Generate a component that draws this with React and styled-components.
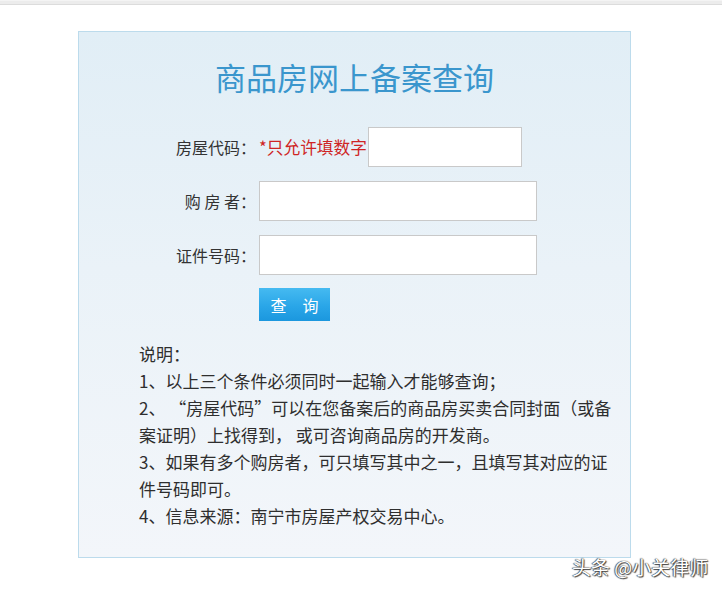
import styled, { createGlobalStyle } from "styled-components";

const GlobalStyle = createGlobalStyle`
  html, body {
    margin: 0;
    padding: 0;
    background: #fff;
  }
  body {
    font-family: "Noto Sans CJK SC", "Noto Sans", sans-serif;
    color: #333;
  }
`;

const Page = styled.div`
  position: relative;
  width: 722px;
  height: 596px;
  overflow: hidden;
`;

const TopStrip = styled.div`
  height: 3px;
  background: #ececec;
  border-bottom: 1px solid #dcdcdc;
  border-top: 1px solid #f4f4f4;
`;

const Panel = styled.div`
  margin: 26px 0 0 78px;
  width: 553px;
  height: 527px;
  box-sizing: border-box;
  border: 1px solid #bcdbec;
  background: linear-gradient(180deg, #e1eef6 0%, #eaf2f8 45%, #f3f6fa 100%);
  padding: 23px 0 0;
`;

const Title = styled.h1`
  margin: 0 0 28px;
  font-size: 31px;
  font-weight: normal;
  line-height: 44px;
  text-align: center;
  color: #3a96cd;
`;

const Form = styled.div`
  display: flex;
  flex-direction: column;
  gap: 14px;
`;

const Row = styled.div`
  display: flex;
  align-items: center;
  height: 40px;
`;

const Label = styled.span`
  width: 177px;
  margin-right: 3px;
  text-align: right;
  font-size: 16px;
  color: #333;
  white-space: pre;
`;

const Hint = styled.span`
  font-size: 16.7px;
  color: #cf2424;
  margin-right: 1px;
`;

const Input = styled.input`
  box-sizing: border-box;
  width: ${(p) => p.$w}px;
  height: 40px;
  margin: 0;
  border: 1px solid #c9c9c9;
  background: #fff;
  outline: none;
`;

const ButtonRow = styled.div`
  padding-left: 180px;
  margin-top: -1px;
`;

const QueryButton = styled.button`
  width: 71px;
  height: 33px;
  border: none;
  padding: 0;
  background: linear-gradient(180deg, #45baf1 0%, #2aa6e8 55%, #1b97de 100%);
  color: #fff;
  font-family: "Noto Sans CJK SC", sans-serif;
  font-size: 16px;
  cursor: pointer;
`;

const Notes = styled.div`
  margin: 19px 0 0 60px;
  width: 476px;
  font-size: 17px;
  line-height: 27px;
  color: #2e2e2e;
`;

const Watermark = styled.div`
  position: absolute;
  left: 572px;
  top: 553px;
  font-family: "Noto Sans CJK SC", sans-serif;
  font-size: 19px;
  color: #fff;
  text-shadow: 0 0 1px #222, 1px 1px 1px #444, -1px 0 1px #666;
  white-space: pre;
`;

export default function App() {
  return (
    <Page>
      <GlobalStyle />
      <TopStrip />
      <Panel>
        <Title>商品房网上备案查询</Title>
        <Form>
          <Row>
            <Label>房屋代码：</Label>
            <Hint>*只允许填数字</Hint>
            <Input $w={154} />
          </Row>
          <Row>
            <Label>购 房 者：</Label>
            <Input $w={278} />
          </Row>
          <Row>
            <Label>证件号码：</Label>
            <Input $w={278} />
          </Row>
          <ButtonRow>
            <QueryButton>查　询</QueryButton>
          </ButtonRow>
        </Form>
        <Notes>
          <div>说明：</div>
          <div>1、以上三个条件必须同时一起输入才能够查询；</div>
          <div>2、 “房屋代码”可以在您备案后的商品房买卖合同封面（或备案证明）上找得到， 或可咨询商品房的开发商。</div>
          <div>3、如果有多个购房者，可只填写其中之一，且填写其对应的证件号码即可。</div>
          <div>4、信息来源：南宁市房屋产权交易中心。</div>
        </Notes>
      </Panel>
      <Watermark>头条 @小关律师</Watermark>
    </Page>
  );
}
